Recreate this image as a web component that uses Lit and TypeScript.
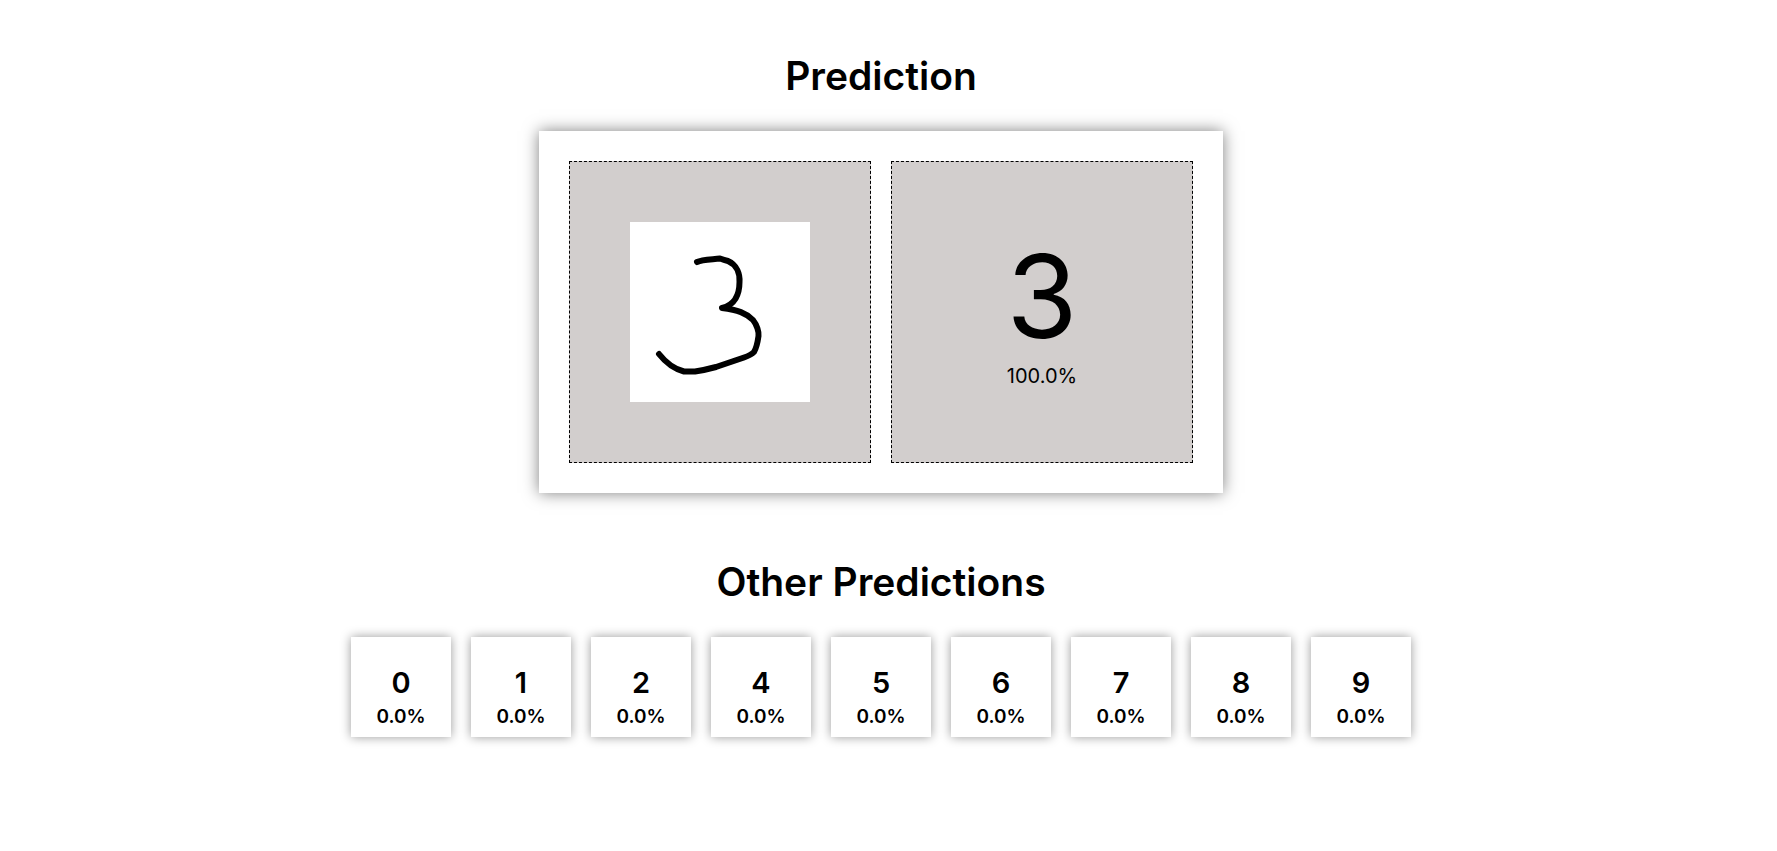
import { LitElement, html, css } from "lit";
import { customElement, property } from "lit/decorators.js";

interface Guess {
  digit: number;
  confidence: number;
}

const best: Guess = { digit: 3, confidence: 100 };
const others: Guess[] = [0, 1, 2, 4, 5, 6, 7, 8, 9].map((digit) => ({
  digit,
  confidence: 0,
}));

const percent = (value: number) => `${value.toFixed(1)}%`;

@customElement("digit-card")
export class DigitCard extends LitElement {
  @property({ type: Object }) guess!: Guess;

  static styles = css`
    :host {
      display: flex;
      flex-direction: column;
      justify-content: flex-end;
      align-items: center;
      box-sizing: border-box;
      width: 100px;
      height: 100px;
      padding-bottom: 8px;
      background: #fff;
      box-shadow: 0 0 10px rgba(0, 0, 0, 0.4);
      font-weight: 600;
    }
    .digit {
      font-size: 29px;
      line-height: 36px;
    }
    .confidence {
      font-size: 19px;
      line-height: 24px;
      margin-top: 4px;
    }
  `;

  render() {
    return html`
      <span class="digit">${this.guess.digit}</span>
      <span class="confidence">${percent(this.guess.confidence)}</span>
    `;
  }
}

@customElement("app-root")
export class AppRoot extends LitElement {
  static styles = css`
    :host {
      display: block;
      box-sizing: border-box;
      padding: 56px 15px 56px 0;
      background: #fff;
      color: #000;
      font-family: Inter, "Open Sans", sans-serif;
    }
    section {
      display: flex;
      flex-direction: column;
      align-items: center;
    }
    .others {
      margin-top: 69px;
    }
    .title {
      margin: 0 0 35px;
      font-size: 39px;
      line-height: 40px;
      font-weight: 600;
    }
    .panel {
      display: flex;
      gap: 20px;
      padding: 30px;
      background: #fff;
      box-shadow: 0 0 15px rgba(0, 0, 0, 0.5);
    }
    .tile {
      display: flex;
      flex-direction: column;
      align-items: center;
      justify-content: center;
      width: 300px;
      height: 300px;
      border: 1px dashed #000;
      background: #d2cecd;
    }
    .drawing {
      width: 180px;
      height: 180px;
      background: #fff;
    }
    .digit {
      font-size: 115px;
      line-height: 122px;
    }
    .confidence {
      font-size: 20px;
      line-height: 24px;
      margin-top: 6px;
    }
    .list {
      display: flex;
      flex-wrap: wrap;
      justify-content: center;
      gap: 20px;
      margin: 0;
      padding: 0;
      list-style: none;
    }
  `;

  render() {
    return html`
      <section>
        <h1 class="title">Prediction</h1>
        <div class="panel">
          <div class="tile">
            <svg class="drawing" viewBox="0 0 180 180" role="img" aria-label="Handwritten digit">
              <path
                d="M67 40 C72 37.500 82 37.500 90 36.500 Q94 38 98 39 C107 43 110 52 109.500 60 C109.500 72 105 83 92 86 C108 88 116 91 123 98 C127 103 129 110 128.500 114 Q127 125 124 130 Q121 133 114 135.500 L86 145 Q75 148 65 149.500 H54 Q40 146 29 132"
                fill="none"
                stroke="#000"
                stroke-width="6"
                stroke-linecap="round"
                stroke-linejoin="round"
              />
            </svg>
          </div>
          <div class="tile">
            <span class="digit">${best.digit}</span>
            <span class="confidence">${percent(best.confidence)}</span>
          </div>
        </div>
      </section>
      <section class="others">
        <h2 class="title">Other Predictions</h2>
        <ul class="list">
          ${others.map((guess) => html`<li><digit-card .guess=${guess}></digit-card></li>`)}
        </ul>
      </section>
    `;
  }
}
